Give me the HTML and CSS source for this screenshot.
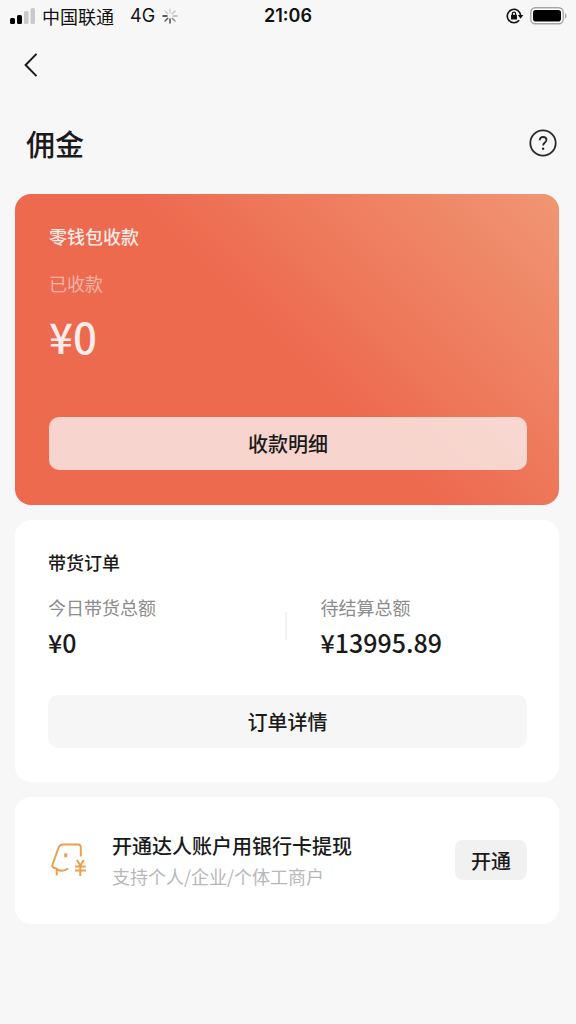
FILE: index.html
```html
<!DOCTYPE html>
<html lang="zh-CN">
<head>
<meta charset="utf-8">
<meta name="viewport" content="width=device-width, initial-scale=1">
<title>佣金</title>
<link rel="stylesheet" href="styles.css">
</head>
<body>
<div class="status">
  <div class="status-side">
    <svg width="26" height="18" viewBox="0 0 26 18" aria-hidden="true">
      <rect x="1" y="11" width="5" height="6" rx="1.5" fill="#000"/>
      <rect x="8" y="8" width="5" height="9" rx="1.5" fill="#000"/>
      <rect x="15" y="4" width="4.5" height="13" rx="1.5" fill="#c9c9c9"/>
      <rect x="21.5" y="1" width="4.5" height="16" rx="1.5" fill="#c9c9c9"/>
    </svg>
    <span class="carrier">中国联通</span>
    <span class="network">4G</span>
    <svg width="16" height="16" viewBox="0 0 16 16" fill="none" stroke-width="1.4" stroke-linecap="round" aria-hidden="true">
      <path d="M8 1v4" stroke="#d2d2d2"/>
      <path d="M13 3l-2.8 2.8" stroke="#c4c4c4"/>
      <path d="M15 8h-4" stroke="#b5b5b5"/>
      <path d="M13 13l-2.8-2.8" stroke="#8a8a8a"/>
      <path d="M8 15v-4" stroke="#444"/>
      <path d="M3 13l2.8-2.8" stroke="#555"/>
      <path d="M1 8h4" stroke="#222"/>
      <path d="M3 3l2.8 2.8" stroke="#ccc"/>
    </svg>
  </div>
  <time class="clock">21:06</time>
  <div class="status-side status-right">
    <svg width="18" height="16" viewBox="0 0 18 16" fill="none" aria-hidden="true">
      <path d="M13.2 12.3A6.700 6.700 0 1 1 14.700 7.400" stroke="#111" stroke-width="1.6"/>
      <path d="M11.800 7h5.600l-2.800 3.800z" fill="#111"/>
      <rect x="5" y="6.800" width="6" height="4.800" rx=".6" fill="#111"/>
      <path d="M6.400 7.200V5.800a1.600 1.600 0 0 1 3.200 0v1.400" stroke="#111" stroke-width="1.2"/>
    </svg>
    <svg width="37" height="18" viewBox="0 0 37 18" aria-hidden="true">
      <rect x=".8" y=".8" width="32.4" height="16" rx="4.5" fill="#fff" stroke="#a5a5a5" stroke-width="1.4"/>
      <rect x="3" y="3" width="28" height="11.6" rx="2.8" fill="#000"/>
      <path d="M35 6v6q1.6-1 1.6-3T35 6z" fill="#a5a5a5"/>
    </svg>
  </div>
</div>

<nav class="nav">
  <button class="icon-button" type="button" aria-label="返回">
    <svg width="14" height="24" viewBox="0 0 14 24" fill="none" stroke="#1a1a1a" stroke-width="2" stroke-linecap="square"><path d="M11.8 1.6L1.6 12l10.2 10.4"/></svg>
  </button>
</nav>

<header class="heading">
  <h1>佣金</h1>
  <button class="icon-button" type="button" aria-label="帮助">
    <svg width="28" height="28" viewBox="0 0 28 28" fill="none" stroke="#2a2a2a" stroke-width="1.8">
      <circle cx="14" cy="14" r="12.7"/>
      <path d="M10.7 11.3C10.7 9.100 12 8 14 8s3.500 1.200 3.500 3c0 2.500-3.400 2.600-3.400 5.600"/>
      <circle cx="14.1" cy="19.8" r="1.2" fill="#2a2a2a" stroke="none"/>
    </svg>
  </button>
</header>

<main class="cards">
  <section class="card wallet">
    <h2 class="wallet-title">零钱包收款</h2>
    <p class="wallet-label">已收款</p>
    <p class="wallet-amount">¥0</p>
    <button class="wide-button wallet-button" type="button">收款明细</button>
  </section>

  <section class="card orders">
    <h2 class="orders-title">带货订单</h2>
    <div class="totals">
      <div class="total">
        <p class="total-label">今日带货总额</p>
        <p class="total-value">¥0</p>
      </div>
      <div class="total">
        <p class="total-label">待结算总额</p>
        <p class="total-value">¥13995.89</p>
      </div>
    </div>
    <button class="wide-button" type="button">订单详情</button>
  </section>

  <section class="card account">
    <svg width="36" height="36" viewBox="0 0 36 36" fill="none" stroke="#eba04f" stroke-width="2" aria-hidden="true">
      <path d="M29.8 14.5V5.200Q29.800 2.500 27 2.500H12.500Q8.700 2.500 7.400 6L1.400 23Q.8 25 2.800 25.700L5.700 26.700V33.500"/>
      <path d="M5.700 27.500Q12 30.200 17.300 26.500"/>
      <path d="M14.700 11.300v4" stroke-width="3"/>
      <path d="M25.900 18l3.400 5.500L32.700 18M29.300 23.500V34M24 24.500H34.800M24 28.500H34.800"/>
    </svg>
    <div class="account-text">
      <h2 class="account-title">开通达人账户用银行卡提现</h2>
      <p class="account-note">支持个人/企业/个体工商户</p>
    </div>
    <button class="open-button" type="button">开通</button>
  </section>
</main>
</body>
</html>
```
FILE: styles.css
```css
* {
  box-sizing: border-box;
}

body {
  margin: 0;
  min-height: 100vh;
  background: #f7f7f7;
  color: #1a1a1a;
  font-family: "Noto Sans CJK SC", sans-serif;
}

h1, h2, p {
  margin: 0;
}

button {
  margin: 0;
  padding: 0;
  border: 0;
  color: inherit;
  font: inherit;
}

svg {
  display: block;
  flex: none;
}

.status {
  display: grid;
  grid-template-columns: 1fr auto 1fr;
  align-items: center;
  height: 32px;
  padding: 0 9px;
  color: #111;
}

.status-side {
  display: flex;
  align-items: center;
}

.status-right {
  justify-content: flex-end;
  gap: 6px;
}

.carrier {
  margin-left: 7px;
  font-size: 18px;
  line-height: 24px;
}

.network {
  margin: 0 7px 0 16px;
  font: 18px/24px Inter, sans-serif;
}

.clock {
  font: 600 18px/24px Inter, sans-serif;
}

.nav {
  display: flex;
  align-items: center;
  height: 66px;
  padding: 0 24px;
}

.icon-button {
  background: none;
}

.heading {
  display: flex;
  align-items: center;
  justify-content: space-between;
  padding: 23px 19px 29px 26px;
}

.heading h1 {
  font-size: 29px;
  font-weight: 500;
  line-height: 44px;
}

.cards {
  display: flex;
  flex-direction: column;
  gap: 15px;
  padding: 0 17px 24px 15px;
}

.card {
  border-radius: 16px;
  background: #fff;
}

.wallet {
  padding: 28px 32px 34px 34px;
  background: linear-gradient(45deg, #ed6a4f 50%, #f09673);
  color: rgba(255, 255, 255, 0.88);
}

.wallet-title {
  font-size: 18px;
  font-weight: 500;
  line-height: 28px;
}

.wallet-label {
  margin-top: 19px;
  color: rgba(255, 255, 255, 0.5);
  font-size: 18px;
  line-height: 28px;
}

.wallet-amount {
  margin-top: 15px;
  font-size: 42px;
  font-weight: 500;
  line-height: 48px;
}

.wide-button {
  display: block;
  width: 100%;
  height: 53px;
  border-radius: 10px;
  background: #f6f6f6;
  font-size: 20px;
  font-weight: 500;
}

.wallet-button {
  margin-top: 57px;
  background: rgba(249, 239, 236, 0.8);
  color: #1a1a1a;
}

.wallet {
  padding-bottom: 35px;
}

.orders {
  padding: 28px 32px 34px 33px;
}

.orders-title {
  font-size: 18px;
  font-weight: 500;
  line-height: 28px;
}

.totals {
  display: grid;
  grid-template-columns: 1fr 1fr;
  gap: 2px;
  margin: 16px 0 33px;
}

.total + .total {
  padding-left: 32px;
}

.total:first-child {
  background: linear-gradient(#f3f3f3, #f3f3f3) no-repeat 100% 20px / 2px 28px;
}

.total-label {
  color: #8c8c8c;
  font-size: 18px;
  line-height: 30px;
}

.total-value {
  font-size: 25px;
  font-weight: 500;
  line-height: 40px;
}

.account {
  display: flex;
  align-items: center;
  padding: 33px 32px 34px 36px;
}

.account-text {
  flex: 1;
  margin-left: 25px;
}

.account-title {
  font-size: 20px;
  font-weight: 500;
  line-height: 32px;
}

.account-note {
  color: #b8b8b8;
  font-size: 18px;
  line-height: 28px;
}

.open-button {
  width: 72px;
  height: 40px;
  border-radius: 8px;
  background: #f1f1f1;
  font-size: 20px;
  font-weight: 500;
}
```
